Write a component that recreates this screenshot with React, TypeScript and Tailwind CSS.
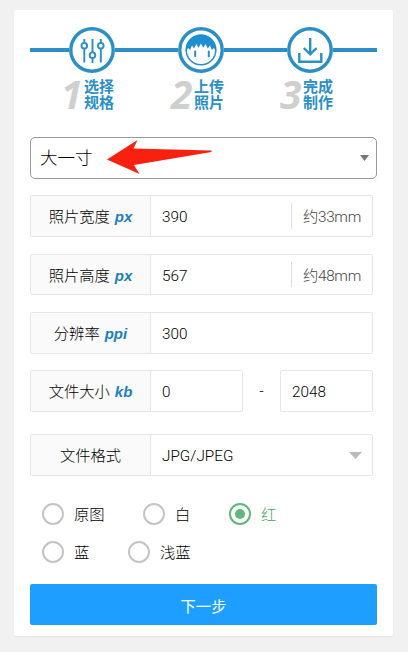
import React from "react";
import clsx from "clsx";

interface StepProps {
  index: number;
  lines: [string, string];
  className?: string;
}

const SlidersIcon: React.FC = () => (
  <svg viewBox="0 0 46 46" className="block h-full w-full" fill="none" stroke="#2b8fc6">
    <circle cx="23" cy="23" r="21.2" strokeWidth="3.4" />
    <g strokeWidth="1.9">
      <path d="M15.3 12v4M15.3 21.500v14M23.500 12v14M23.500 31v5M31.800 12v4M31.800 21.500v14" />
      <circle cx="15.3" cy="18.7" r="2.8" />
      <circle cx="23.5" cy="28.2" r="2.8" />
      <circle cx="31.8" cy="18.7" r="2.8" />
    </g>
  </svg>
);

const FaceIcon: React.FC = () => (
  <svg viewBox="0 0 46 46" className="block h-full w-full" fill="none" stroke="#2b8fc6">
    <circle cx="23" cy="23" r="21.2" strokeWidth="3.4" />
    <circle cx="23" cy="23" r="14.8" strokeWidth="1.5" />
    <path
      d="M7.800 24C7.600 14.500 14 7.600 23 7.600s15.400 6.900 15.200 16.400L35.800 21 34 23 32 18.500 29.800 21.500 27.500 17 25.200 20.800 23 16.500 20.600 20.800 18.300 17 16 21.500 14 18.500 12 23 10.200 21Z"
      fill="#1b8fd0"
      stroke="none"
    />
    <path d="M17.200 24.500v4.800M30.800 24.500v4.800" strokeWidth="2" strokeLinecap="round" />
  </svg>
);

const SaveIcon: React.FC = () => (
  <svg viewBox="0 0 46 46" className="block h-full w-full" fill="none" stroke="#2b8fc6">
    <circle cx="23" cy="23" r="21.2" strokeWidth="3.4" />
    <path d="M23.200 11v16M16.800 21l6.400 6.300 6.400-6.300" strokeWidth="2.4" />
    <path d="M12.300 26v8.800h22V26" strokeWidth="2.4" />
  </svg>
);

const Step: React.FC<StepProps> = ({ index, lines, className }) => (
  <div className={clsx("flex items-center", className)}>
    <span className="mt-[-3px] w-[23px] shrink-0 font-['Open_Sans',sans-serif] text-[39px] leading-[32px] font-bold text-[#cfcfcf] italic">
      {index}
    </span>
    <span className="mt-[-1px] text-[15px] leading-[16px] font-bold whitespace-nowrap text-[#2b8fc6]">
      {lines[0]}
      <br />
      {lines[1]}
    </span>
  </div>
);

const Line: React.FC<{ className: string }> = ({ className }) => (
  <div className={clsx("h-[4px] shrink-0 bg-[#2b8fc6]", className)} />
);

interface FieldProps {
  label: string;
  unit?: string;
  value: string;
  hint?: string;
  className?: string;
  children?: React.ReactNode;
}

const Field: React.FC<FieldProps> = ({ label, unit, value, hint, className, children }) => (
  <div className={clsx("flex rounded-[2px] border border-[#e6e6e6]", className)}>
    <div className="flex w-[120px] shrink-0 items-center justify-center border-r border-[#e6e6e6] bg-[#fafafa] pt-[2px]">
      {label}
      {unit && (
        <span className="ml-[5px] font-['Liberation_Sans',sans-serif] text-[15px] font-bold text-[#1c7fc0] italic">
          {unit}
        </span>
      )}
    </div>
    <div className="flex flex-1 items-center pt-[2px] pl-[11px]">{value}</div>
    {hint && (
      <div className="my-[7px] flex w-[81px] items-center border-l border-[#ddd] pt-[2px] pl-[11px] tracking-[-0.3px] whitespace-nowrap text-[#444]">
        {hint}
      </div>
    )}
    {children}
  </div>
);

interface RadioProps {
  label: string;
  checked?: boolean;
  className?: string;
}

const Radio: React.FC<RadioProps> = ({ label, checked, className }) => (
  <div className={clsx("flex items-center gap-[10px]", checked && "text-[#3fa85e]", className)}>
    <span
      className={clsx(
        "flex h-[22px] w-[22px] items-center justify-center rounded-full border-2",
        checked ? "border-[#5fb878]" : "border-[#c4c4c4]"
      )}
    >
      {checked && <span className="h-[10px] w-[10px] rounded-full bg-[#5fb878]" />}
    </span>
    <span className="pt-[2px]">{label}</span>
  </div>
);

const App: React.FC = () => {
  return (
    <div className="h-[652px] w-[408px] bg-[#f1f1f1] pt-[10px] pl-[14px] font-['Roboto','Noto_Sans_CJK_SC',sans-serif] text-[15.3px] leading-[20px] text-black">
      <div className="h-[626px] w-[379px] rounded-[2px] bg-white px-4 pt-[17px] shadow-[0_1px_2px_rgba(0,0,0,0.06)]">
        <div className="flex items-center">
          <Line className="w-[39px]" />
          <div className="h-[46px] w-[46px]">
            <SlidersIcon />
          </div>
          <Line className="w-[63px]" />
          <div className="h-[46px] w-[46px]">
            <FaceIcon />
          </div>
          <Line className="w-[63px]" />
          <div className="h-[46px] w-[46px]">
            <SaveIcon />
          </div>
          <Line className="w-[44px]" />
        </div>
        <div className="mt-[5px] flex h-[34px]">
          <Step index={1} lines={["选择", "规格"]} className="ml-[31px] w-[108px]" />
          <Step index={2} lines={["上传", "照片"]} className="w-[109px] pl-[2px]" />
          <Step index={3} lines={["完成", "制作"]} className="pl-[2px]" />
        </div>

        <div className="mt-[25px] flex h-[42px] w-[347px] items-center rounded-[5px] border border-[#999] pr-[7px] pl-[9px] text-[17.5px] font-light">
          大一寸
          <svg className="ml-[14px] h-[38px] w-[106px]" viewBox="0 0 106 38">
            <path d="M0 20.500 30.500 1 26.500 9.500 104.500 11.500v1.500L27 26l5.500 9z" fill="#f9200f" />
          </svg>
          <svg className="ml-auto h-[6px] w-[9px]" viewBox="0 0 9 6">
            <path d="M0 0h9L4.500 6z" fill="#757575" />
          </svg>
        </div>

        <div className="w-[343px] font-light">
          <Field label="照片宽度" unit="px" value="390" hint="约33mm" className="mt-4 h-[42px]" />
          <Field label="照片高度" unit="px" value="567" hint="约48mm" className="mt-[17px] h-[41px]" />
          <Field label="分辨率" unit="ppi" value="300" className="mt-[17px] h-[42px]" />
          <div className="mt-4 flex h-[42px]">
            <Field label="文件大小" unit="kb" value="0" className="w-[213px]" />
            <div className="flex w-[37px] items-center justify-center">-</div>
            <div className="flex w-[93px] items-center rounded-[2px] border border-[#e6e6e6] pt-[2px] pl-[11px]">
              2048
            </div>
          </div>
          <Field label="文件格式" value="JPG/JPEG" className="mt-[22px] h-[42px]">
            <svg className="mr-[10px] h-[7px] w-[13px] self-center" viewBox="0 0 13 7">
              <path d="M0 0h13L6.500 7z" fill="#bcbcbc" />
            </svg>
          </Field>
        </div>

        <div className="mt-[27px] flex pl-[12px] font-light">
          <Radio label="原图" className="w-[101px]" />
          <Radio label="白" className="w-[86px]" />
          <Radio label="红" checked />
        </div>
        <div className="mt-4 flex pl-[12px] font-light">
          <Radio label="蓝" className="w-[86px]" />
          <Radio label="浅蓝" />
        </div>

        <button className="mt-[21px] block h-[41px] w-[347px] rounded-[2px] bg-[#1e9fff] pt-[4px] text-center font-normal text-white">
          下一步
        </button>
      </div>
    </div>
  );
};

export default App;
